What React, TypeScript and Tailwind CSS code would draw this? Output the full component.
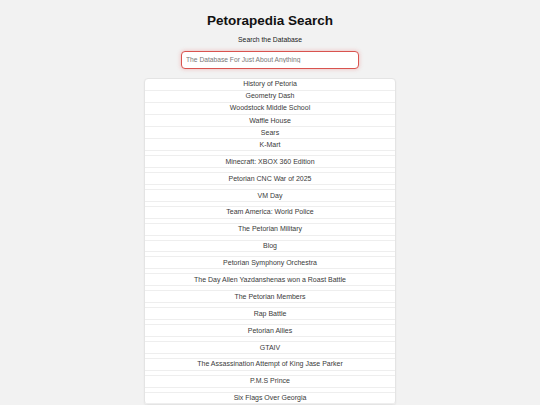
import React from "react";

const top = [
  "History of Petoria",
  "Geometry Dash",
  "Woodstock Middle School",
  "Waffle House",
  "Sears",
  "K-Mart",
];

const rest = [
  "Minecraft: XBOX 360 Edition",
  "Petorian CNC War of 2025",
  "VM Day",
  "Team America: World Police",
  "The Petorian Military",
  "Blog",
  "Petorian Symphony Orchestra",
  "The Day Allen Yazdanshenas won a Roast Battle",
  "The Petorian Members",
  "Rap Battle",
  "Petorian Allies",
  "GTAIV",
  "The Assassination Attempt of King Jase Parker",
  "P.M.S Prince",
  "Six Flags Over Georgia",
];

export default function App() {
  return (
    <div
      className="bg-[#f2f2f2] flex flex-col items-center pt-[12px] overflow-hidden h-[405px]"
      style={{ fontFamily: '"Liberation Sans", Arial, sans-serif' }}
    >
      <h1 className="text-[13.5px] leading-[18px] font-bold text-[#111]">Petorapedia Search</h1>
      <p className="mt-[5px] text-[6.8px] leading-[10px] text-[#222]">Search the Database</p>
      <div className="mt-[6px] w-[178px] h-[18px] shrink-0 flex items-center border border-[#d9534f] rounded-[4px] bg-white shadow-[0_0_4px_rgba(230,80,80,0.35)]">
        <input
          className="block w-full h-[12px] p-0 px-[4px] bg-transparent text-[6.7px] leading-[12px] text-[#333] placeholder:text-[#777] outline-none"
          placeholder="The Database For Just About Anything"
        />
      </div>
      <div className="mt-[8.5px] shrink-0 w-[252px] bg-white border border-[#e4e4e4] rounded-[4px] shadow-[0_1px_2px_rgba(0,0,0,0.05)]">
        {top.map((t) => (
          <div
            key={t}
            className="h-[12.1px] pt-[1px] border-b border-[#eeeeee] flex items-center justify-center text-[7px] text-[#3a3a3a]"
          >
            {t}
          </div>
        ))}
        {rest.map((t) => (
          <div key={t}>
            <div className="h-[5px] border-b border-[#eeeeee]" />
            <div className="h-[11.9px] pt-[1px] border-b border-[#eeeeee] flex items-center justify-center text-[7px] text-[#3a3a3a]">
              {t}
            </div>
          </div>
        ))}
      </div>
    </div>
  );
}
